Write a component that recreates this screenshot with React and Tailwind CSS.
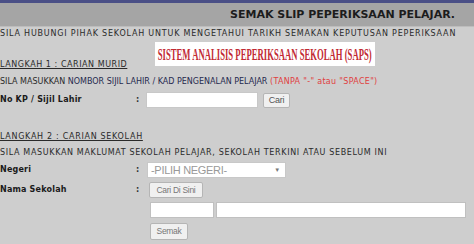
import React from 'react';

const Label = ({ children }) => (
  <div className="w-[136px] shrink-0 font-bold text-[#1a1a1a] tracking-[0.2px]">{children}</div>
);

const Colon = () => <div className="w-[10px] shrink-0 font-bold text-[#333]">:</div>;

const Button = ({ children, className = '' }) => (
  <button
    className={`bg-[#f0f0f0] border border-[#b5b5b5] rounded-[2px] text-[#555] font-['Liberation_Sans',Arial,sans-serif] tracking-[-0.3px] ${className}`}
  >
    {children}
  </button>
);

export default function App() {
  return (
    <div className="w-[474px] h-[244px] overflow-hidden bg-[#cecece] font-['DejaVu_Sans',Verdana,sans-serif] text-[8px] text-[#2a2a2a] leading-none">
      {/* top strip */}
      <div className="h-[3px] bg-[#4a4f86]" />

      {/* header band */}
      <div className="h-[24px] bg-[#a5a5a5] flex items-center justify-end pr-[19px] border-b border-[#bdbdbd]">
        <h1 className="text-[11px] font-bold text-[#1c1c1c]">SEMAK SLIP PEPERIKSAAN PELAJAR.</h1>
      </div>

      <div className="h-[14px] flex items-center tracking-[0.8px] whitespace-nowrap">
        SILA HUBUNGI PIHAK SEKOLAH UNTUK MENGETAHUI TARIKH SEMAKAN KEPUTUSAN PEPERIKSAAN
      </div>

      {/* langkah 1 + banner */}
      <div className="h-[29px] flex">
        <div className="w-[155px] flex items-end pb-[1px]">
          <span className="underline underline-offset-1 tracking-[0.55px] whitespace-nowrap">LANGKAH 1 : CARIAN MURID</span>
        </div>
        <div className="mt-[1px] w-[220px] h-[24px] bg-white flex items-end justify-center overflow-hidden">
          <span className="inline-block mb-[3px] font-['Liberation_Serif','Times_New_Roman',serif] font-bold text-[17px] text-[#c22a33] scale-x-[0.51] whitespace-nowrap">
            SISTEM ANALISIS PEPERIKSAAN SEKOLAH (SAPS)
          </span>
        </div>
      </div>

      <div className="mt-[8px] whitespace-nowrap">
        SILA MASUKKAN <span className="text-[#262a4e]">NOMBOR SIJIL LAHIR / KAD PENGENALAN PELAJAR</span>{' '}
        <span className="text-[#e0403f] tracking-[0.3px]">(TANPA "-" atau "SPACE")</span>
      </div>
      <div className="mt-[6px] flex items-center">
        <Label>No KP / Sijil Lahir</Label>
        <Colon />
        <input className="w-[112px] h-[16px] bg-white border border-[#c8c8c8]" />
        <Button className="ml-[5px] w-[27px] h-[15px] text-[9px]">Cari</Button>
      </div>

      {/* langkah 2 */}
      <div className="mt-[25px] underline underline-offset-1 tracking-[0.7px] whitespace-nowrap">LANGKAH 2 : CARIAN SEKOLAH</div>
      <div className="mt-[8px] tracking-[0.65px] whitespace-nowrap">
        SILA MASUKKAN MAKLUMAT SEKOLAH PELAJAR, SEKOLAH TERKINI ATAU SEBELUM INI
      </div>
      <div className="mt-[5px] flex items-center">
        <Label>Negeri</Label>
        <Colon />
        <div className="ml-[1px] w-[139px] h-[16px] bg-white border border-[#c8c8c8] flex items-center justify-between px-[3px] font-['Liberation_Sans',Arial,sans-serif] text-[11px] text-[#999] tracking-[-0.3px]">
          <span>-PILIH NEGERI-</span>
          <span className="text-[6px] text-[#777] mr-[2px]">▼</span>
        </div>
      </div>
      <div className="mt-[4px] flex items-center">
        <Label>Nama Sekolah</Label>
        <Colon />
        <Button className="ml-[3px] w-[54px] h-[16px] text-[8.5px] text-[#777]">Cari Di Sini</Button>
      </div>
      <div className="mt-[4px] ml-[150px] flex gap-[2px]">
        <input className="w-[64px] h-[16px] bg-white border border-[#c0c0c0]" />
        <input className="w-[250px] h-[16px] bg-white border border-[#c0c0c0]" />
      </div>
      <div className="mt-[5px] ml-[150px]">
        <Button className="w-[38px] h-[17px] text-[8.5px] text-[#777]">Semak</Button>
      </div>
    </div>
  );
}
